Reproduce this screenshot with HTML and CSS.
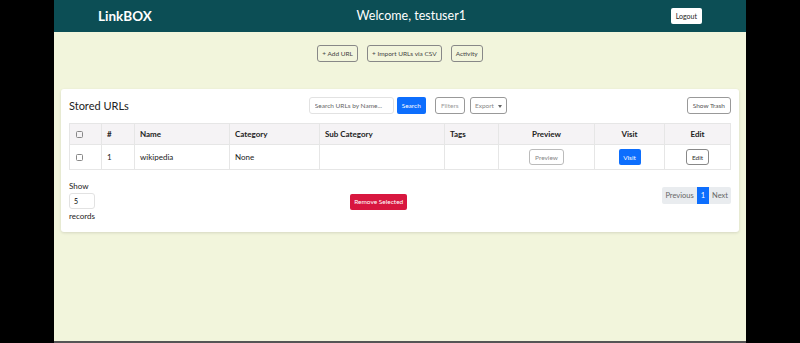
FILE: index.html
```html
<!DOCTYPE html>
<html lang="en">
<head>
    <meta charset="UTF-8">
    <meta name="viewport" content="width=device-width, initial-scale=1.0">
    <title>LinkBOX</title>
    <link rel="stylesheet" href="styles.css">
</head>
<body>
<div class="app">
    <header class="topbar">
        <div class="logo">LinkBOX</div>
        <div class="welcome">Welcome, testuser1</div>
        <button class="btn-logout">Logout</button>
    </header>

    <div class="actions">
        <button class="btn-outline">+ Add URL</button>
        <button class="btn-outline">+ Import URLs via CSV</button>
        <button class="btn-outline">Activity</button>
    </div>

    <section class="card">
        <div class="card-top">
            <h2>Stored URLs</h2>
            <div class="tools">
                <input type="text" class="search" placeholder="Search URLs by Name...">
                <button class="btn-blue">Search</button>
                <button class="btn-light filters">Filters</button>
                <button class="btn-light export">Export <span class="caret"></span></button>
            </div>
            <button class="btn-light">Show Trash</button>
        </div>

        <table>
            <thead>
                <tr>
                    <th class="c-check"><input type="checkbox"></th>
                    <th class="c-num">#</th>
                    <th class="c-name">Name</th>
                    <th class="c-cat">Category</th>
                    <th class="c-sub">Sub Category</th>
                    <th class="c-tags">Tags</th>
                    <th class="c-mid c-prev">Preview</th>
                    <th class="c-mid c-visit">Visit</th>
                    <th class="c-mid">Edit</th>
                </tr>
            </thead>
            <tbody>
                <tr>
                    <td><input type="checkbox"></td>
                    <td>1</td>
                    <td>wikipedia</td>
                    <td>None</td>
                    <td></td>
                    <td></td>
                    <td class="c-mid"><button class="btn-light btn-faded">Preview</button></td>
                    <td class="c-mid"><button class="btn-blue">Visit</button></td>
                    <td class="c-mid"><button class="btn-light">Edit</button></td>
                </tr>
            </tbody>
        </table>

        <div class="card-foot">
            <div class="show">
                <span>Show</span>
                <input type="text" value="5" class="records">
                <span>records</span>
            </div>
            <button class="btn-red">Remove Selected</button>
            <div class="pager">
                <span>Previous</span>
                <span class="active">1</span>
                <span>Next</span>
            </div>
        </div>
    </section>
</div>
</body>
</html>
```

FILE: styles.css
```css
body {
    margin: 0;
    padding: 0;
    background-color: #000;
    font-family: Lato, "Open Sans", sans-serif;
    color: #222;
}

.app {
    width: 692px;
    height: 341px;
    margin: 0 auto;
    background-color: #f2f5dc;
    border-bottom: 2px solid #555;
}

.topbar {
    display: flex;
    justify-content: space-between;
    align-items: center;
    height: 32px;
    padding: 0 44px;
    background-color: #0c4e55;
    color: #fff;
}

.logo {
    font-size: 13.5px;
    font-weight: bold;
}

.welcome {
    font-size: 12.5px;
    margin-bottom: 2px;
}

.btn-logout {
    font-family: inherit;
    font-size: 7px;
    background: #fff;
    color: #222;
    border: none;
    border-radius: 2px;
    height: 16px;
    padding: 0 5px;
}

button {
    font-family: inherit;
    cursor: pointer;
    white-space: nowrap;
}

.actions {
    display: flex;
    justify-content: center;
    gap: 9px;
    padding-top: 13px;
}

.btn-outline {
    height: 17px;
    padding: 0 4px;
    font-size: 6.5px;
    color: #444;
    background: transparent;
    border: 1px solid #888;
    border-radius: 3px;
}

.card {
    background: #fff;
    margin: 27px 7px 0;
    padding: 8px 8px 11px;
    border-radius: 3px;
    box-shadow: 0 1px 3px rgba(0, 0, 0, 0.12);
}

.card-top {
    display: flex;
    justify-content: space-between;
    align-items: center;
    height: 17px;
    margin-bottom: 9px;
}

.card-top h2 {
    margin: 0;
    font-size: 11px;
    font-weight: normal;
    color: #222;
}

.tools {
    display: flex;
    align-items: center;
}

.search {
    box-sizing: border-box;
    width: 85px;
    height: 17px;
    padding: 0 5px;
    font-family: inherit;
    font-size: 6.5px;
    border: 1px solid #e2e2e2;
    border-radius: 3px;
}

.search::placeholder {
    color: #666;
}

.btn-blue {
    height: 17px;
    padding: 0 4px;
    font-size: 6.5px;
    color: #fff;
    background: #0d6efd;
    border: none;
    border-radius: 2px;
}

.tools .btn-blue {
    margin-left: 3px;
    width: 29px;
}

.btn-light {
    height: 17px;
    padding: 0 5px;
    font-size: 6.5px;
    color: #555;
    background: #fff;
    border: 1px solid #999;
    border-radius: 3px;
}

.tools .filters {
    margin-left: 9px;
    width: 30px;
    padding: 0;
    color: #999;
}

.tools .export {
    margin-left: 5px;
    width: 37px;
    padding: 0;
    color: #888;
}

.caret {
    display: inline-block;
    margin-left: 2px;
    vertical-align: middle;
    border-top: 3px solid #666;
    border-left: 2.5px solid transparent;
    border-right: 2.5px solid transparent;
}

table {
    width: 100%;
    table-layout: fixed;
    border-collapse: collapse;
    font-size: 8px;
}

th, td {
    box-sizing: border-box;
    border: 1px solid #e6e6e6;
    padding: 0 5px;
    text-align: left;
}

th {
    height: 21px;
    background-color: #f5f3f5;
    font-weight: bold;
}

td {
    height: 25px;
}

.c-check { width: 32px; }
.c-num { width: 33px; }
.c-name { width: 95px; }
.c-cat { width: 90px; }
.c-sub { width: 125px; }
.c-tags { width: 54px; }
.c-prev { width: 96px; }
.c-visit { width: 70px; }

.c-mid {
    text-align: center;
}

input[type="checkbox"] {
    appearance: none;
    width: 7px;
    height: 7px;
    margin: 0 0 0 1px;
    border: 1px solid #888;
    border-radius: 1.5px;
    vertical-align: middle;
}

td .btn-light,
td .btn-blue {
    height: 16px;
    font-size: 6.5px;
}

td .btn-light {
    color: #333;
    border-color: #888;
}

td .btn-faded {
    color: #888;
    border-color: #bbb;
}

td .btn-blue {
    width: 22px;
    padding: 0;
}

.card-foot {
    display: flex;
    justify-content: space-between;
    align-items: center;
    margin-top: 11px;
}

.show {
    display: flex;
    flex-direction: column;
    align-items: flex-start;
    gap: 2px;
    font-size: 8px;
}

.records {
    box-sizing: border-box;
    width: 26px;
    height: 16px;
    padding: 0 4px;
    font-family: inherit;
    font-size: 7px;
    border: 1px solid #e2e2e2;
    border-radius: 3px;
}

.btn-red {
    height: 16px;
    padding: 0 4px;
    font-size: 6.5px;
    color: #fff;
    background: #d8173f;
    border: none;
    border-radius: 2px;
    margin-top: 1px;
}

.pager {
    display: flex;
    align-self: flex-start;
    margin-top: 6px;
    font-size: 7.5px;
    color: #666;
    background: #e9ecef;
    border-radius: 2px;
}

.pager span {
    display: flex;
    align-items: center;
    height: 17px;
    padding: 0 3px;
}

.pager .active {
    background: #0d6efd;
    color: #fff;
    padding: 0 4px;
}
```
